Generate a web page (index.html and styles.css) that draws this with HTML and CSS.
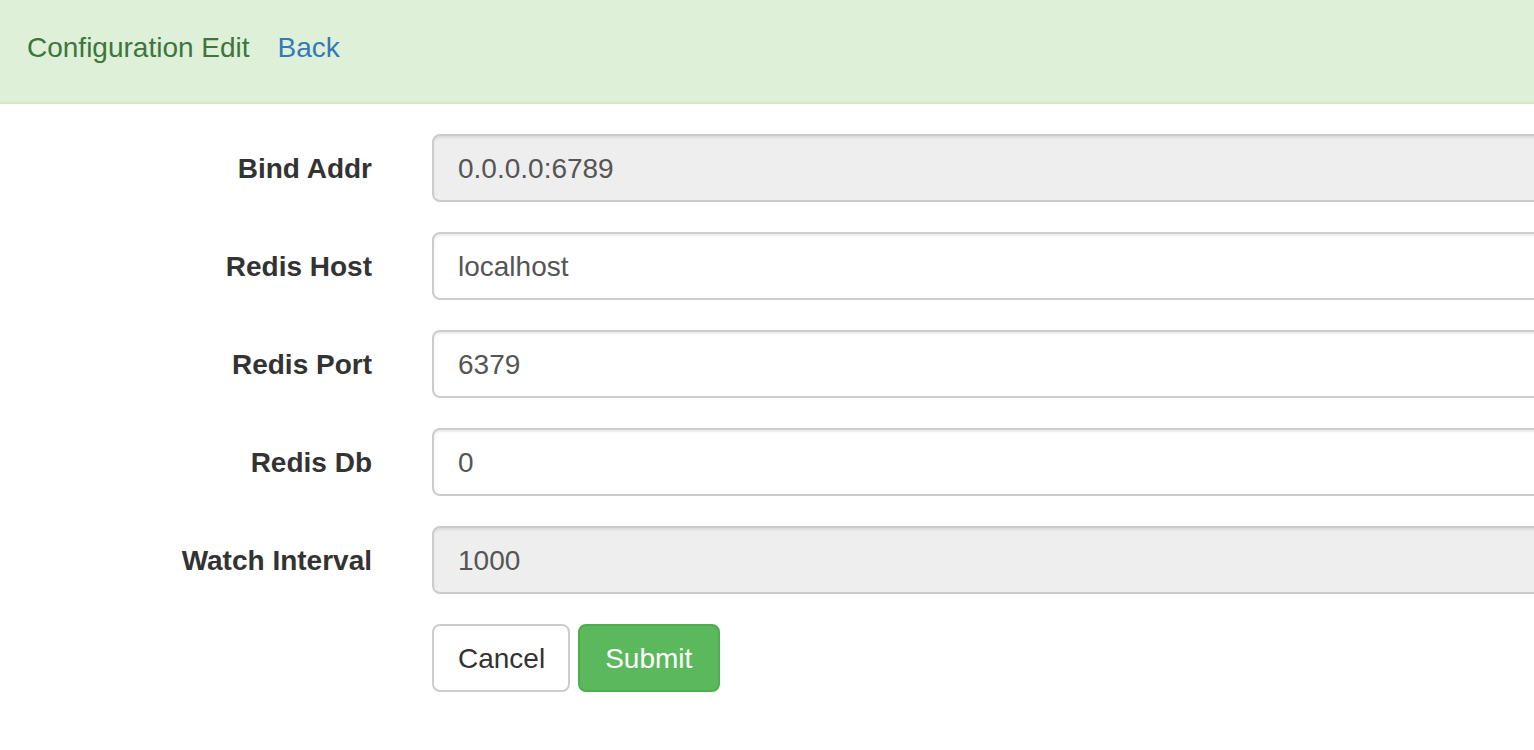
FILE: index.html
```html
<!DOCTYPE html>
<html lang="en">
<head>
<meta charset="utf-8">
<title>Configuration Edit</title>
<link rel="stylesheet" href="styles.css">
</head>
<body>
<header class="topbar">
  <span class="title">Configuration Edit</span>
  <a class="back" href="#">Back</a>
</header>
<form class="config-form">
  <div class="row">
    <label class="label" for="bind">Bind Addr</label>
    <input class="control" id="bind" type="text" value="0.0.0.0:6789" disabled>
  </div>
  <div class="row">
    <label class="label" for="host">Redis Host</label>
    <input class="control" id="host" type="text" value="localhost">
  </div>
  <div class="row">
    <label class="label" for="port">Redis Port</label>
    <input class="control" id="port" type="text" value="6379">
  </div>
  <div class="row">
    <label class="label" for="db">Redis Db</label>
    <input class="control" id="db" type="text" value="0">
  </div>
  <div class="row">
    <label class="label" for="watch">Watch Interval</label>
    <input class="control" id="watch" type="text" value="1000" disabled>
  </div>
  <div class="row actions">
    <span></span>
    <div class="buttons">
      <button type="button" class="btn btn-default">Cancel</button>
      <button type="submit" class="btn btn-success">Submit</button>
    </div>
  </div>
</form>
</body>
</html>
```

FILE: styles.css
```css
html, body {
  margin: 0;
  padding: 0;
  overflow: hidden;
  background: #fff;
}

body {
  font-family: "Liberation Sans", Arial, Helvetica, sans-serif;
  font-size: 28px;
  line-height: 40px;
  color: #333;
}

.topbar {
  width: 1600px;
  height: 102px;
  box-sizing: content-box;
  background: #dff0d8;
  border-bottom: 2px solid #d6e9c6;
  display: flex;
  align-items: flex-start;
  padding: 0 0 0 27px;
}

.title {
  color: #3c763d;
  margin-top: 28px;
}

.back {
  color: #337ab7;
  text-decoration: none;
  margin-top: 28px;
  margin-left: 28px;
}

.config-form {
  width: 1600px;
  margin-top: 30px;
}

.row {
  display: grid;
  grid-template-columns: 372px 1fr;
  column-gap: 60px;
  margin-bottom: 30px;
}

.label {
  text-align: right;
  font-weight: bold;
  padding-top: 15px;
  line-height: 40px;
}

.control {
  display: block;
  box-sizing: border-box;
  width: 100%;
  height: 68px;
  padding: 13px 24px 11px;
  font-family: inherit;
  font-size: 28px;
  line-height: 40px;
  color: #555;
  background: #fff;
  border: 2px solid #ccc;
  border-radius: 8px;
  box-shadow: inset 0 2px 2px rgba(0, 0, 0, 0.075);
  margin: 0;
}

.control:disabled {
  background: #eee;
  color: #555;
  -webkit-text-fill-color: #555;
  opacity: 1;
}

.buttons {
  display: flex;
  gap: 8px;
}

.btn {
  font-family: inherit;
  font-size: 28px;
  line-height: 40px;
  padding: 13px 24px 11px;
  border: 2px solid transparent;
  border-radius: 8px;
  margin: 0;
  cursor: pointer;
}

.btn-default {
  background: #fff;
  color: #333;
  border-color: #ccc;
  padding-right: 23px;
}

.btn-success {
  background: #5cb85c;
  color: #fff;
  border-color: #4cae4c;
  padding-left: 25px;
  padding-right: 26px;
}
```
